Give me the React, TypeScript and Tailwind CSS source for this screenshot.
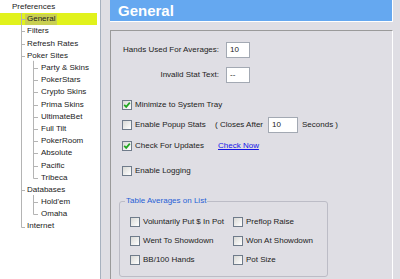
import React from "react";

type Row = { t: string; lvl: number; sel?: boolean };
const rows: Row[] = [
  { t: "Preferences", lvl: 0 },
  { t: "General", lvl: 1, sel: true },
  { t: "Filters", lvl: 1 },
  { t: "Refresh Rates", lvl: 1 },
  { t: "Poker Sites", lvl: 1 },
  { t: "Party & Skins", lvl: 2 },
  { t: "PokerStars", lvl: 2 },
  { t: "Crypto Skins", lvl: 2 },
  { t: "Prima Skins", lvl: 2 },
  { t: "UltimateBet", lvl: 2 },
  { t: "Full Tilt", lvl: 2 },
  { t: "PokerRoom", lvl: 2 },
  { t: "Absolute", lvl: 2 },
  { t: "Pacific", lvl: 2 },
  { t: "Tribeca", lvl: 2 },
  { t: "Databases", lvl: 1 },
  { t: "Hold'em", lvl: 2 },
  { t: "Omaha", lvl: 2 },
  { t: "Internet", lvl: 1 },
];

const RH = 12.2;
const cy = (i: number) => 7 + RH * i;

function TreeLines() {
  const c = "#b4b4b4";
  const segs: React.ReactNode[] = [];
  segs.push(<line key="v0" x1={21.5} y1={13} x2={21.5} y2={Math.round(cy(18)) + 0.5} stroke={c} />);
  rows.forEach((r, i) => {
    if (r.lvl === 1) segs.push(<line key={"h" + i} x1={21.5} y1={Math.round(cy(i)) + 0.5} x2={25} y2={Math.round(cy(i)) + 0.5} stroke={c} />);
    if (r.lvl === 2) segs.push(<line key={"h" + i} x1={33.5} y1={Math.round(cy(i)) + 0.5} x2={38} y2={Math.round(cy(i)) + 0.5} stroke={c} />);
  });
  segs.push(<line key="v1" x1={33.5} y1={cy(4) + 5} x2={33.5} y2={Math.round(cy(14)) + 0.5} stroke={c} />);
  segs.push(<line key="v2" x1={33.5} y1={cy(15) + 5} x2={33.5} y2={Math.round(cy(17)) + 0.5} stroke={c} />);
  return (
    <svg className="absolute left-0 top-0 pointer-events-none" width="100" height="279">
      {segs}
    </svg>
  );
}

function Check({ checked }: { checked?: boolean }) {
  return (
    <span className="w-[10px] h-[10px] border border-[#6f7b8a] bg-linear-to-br from-[#d9d9d6] to-white flex items-center justify-center shrink-0">
      {checked && (
        <svg width="8" height="8" viewBox="0 0 8 8">
          <path d="M1.2 3.8 L3.2 5.9 L6.8 1.6" stroke="#22a722" strokeWidth="1.7" fill="none" />
        </svg>
      )}
    </span>
  );
}

function Box({ w, children }: { w: string; children: React.ReactNode }) {
  return (
    <span className={`${w} h-[16px] bg-white border border-[#a3a9b3] flex items-center pl-[3px] shrink-0`}>{children}</span>
  );
}

export default function App() {
  return (
    <div className="w-[400px] h-[279px] overflow-hidden flex bg-[#dfdee4] text-[8px] leading-none text-[#222] font-['Liberation_Sans',Arial,sans-serif]">
      <div className="relative w-[101px] h-full bg-white border-r border-[#a7b1bf] shrink-0">
        <TreeLines />
        <div className="pt-[1px]">
          {rows.map((r, i) => (
            <div
              key={i}
              className={`h-[12.2px] flex items-center ${r.sel ? "bg-[#e1f21c] mr-[3px] pl-[25px]" : ""} ${
                r.sel ? "" : r.lvl === 0 ? "pl-[12px]" : r.lvl === 1 ? "pl-[27px]" : "pl-[41px]"
              }`}
            >
              {r.sel ? (
                <span className="bg-[#c9cf52] h-[11px] flex items-center px-[2px]">{r.t}</span>
              ) : (
                <span>{r.t}</span>
              )}
            </div>
          ))}
        </div>
      </div>
      <div className="ml-[9px] w-[283px] flex flex-col shrink-0">
        <div className="h-[22px] bg-[#65a8f0] border-b border-r border-white flex items-center pl-[8px] shrink-0">
          <span className="text-white font-bold text-[15px] leading-none">General</span>
        </div>
        <div className="mt-[8px] flex-1 border-t border-l border-[#9a9a9a] border-r border-r-white flex flex-col">
          <div className="mt-[11px] flex items-center h-[16px]">
            <span className="w-[108px] text-right">Hands Used For Averages:</span>
            <span className="ml-[7px]">
              <Box w="w-[24px]">10</Box>
            </span>
          </div>
          <div className="mt-[9px] flex items-center h-[16px]">
            <span className="w-[108px] text-right">Invalid Stat Text:</span>
            <span className="ml-[7px]">
              <Box w="w-[24px]">--</Box>
            </span>
          </div>
          <div className="mt-[16px] flex items-center h-[12px] pl-[11px] gap-[3px]">
            <Check checked />
            <span>Minimize to System Tray</span>
          </div>
          <div className="mt-[6px] flex items-center h-[16px] pl-[11px]">
            <span className="w-[93px] flex items-center gap-[3px]">
              <Check />
              <span>Enable Popup Stats</span>
            </span>
            <span>( Closes After</span>
            <span className="ml-[5px]">
              <Box w="w-[30px]">10</Box>
            </span>
            <span className="ml-[4px]">Seconds )</span>
          </div>
          <div className="mt-[7px] flex items-center h-[12px] pl-[11px]">
            <span className="w-[96px] flex items-center gap-[3px]">
              <Check checked />
              <span>Check For Updates</span>
            </span>
            <span className="text-[#1515e6] underline">Check Now</span>
          </div>
          <div className="mt-[13px] flex items-center h-[12px] pl-[11px] gap-[3px]">
            <Check />
            <span>Enable Logging</span>
          </div>
          <div className="relative mt-[24px] ml-[8px] w-[209px] h-[76px] border border-[#bcbcc6] rounded-[3px] pt-[14px] pl-[10px] flex flex-col gap-[7px]">
            <span className="absolute left-[5px] top-[-5px] bg-[#dfdee4] px-[1px] text-[#1f5fd6]">Table Averages on List</span>
            {[
              ["Voluntarily Put $ In Pot", "Preflop Raise"],
              ["Went To Showdown", "Won At Showdown"],
              ["BB/100 Hands", "Pot Size"],
            ].map(([a, b]) => (
              <div key={a} className="flex items-center h-[12px]">
                <span className="w-[103px] flex items-center gap-[3px]">
                  <Check />
                  <span>{a}</span>
                </span>
                <span className="flex items-center gap-[3px]">
                  <Check />
                  <span>{b}</span>
                </span>
              </div>
            ))}
          </div>
        </div>
      </div>
    </div>
  );
}
